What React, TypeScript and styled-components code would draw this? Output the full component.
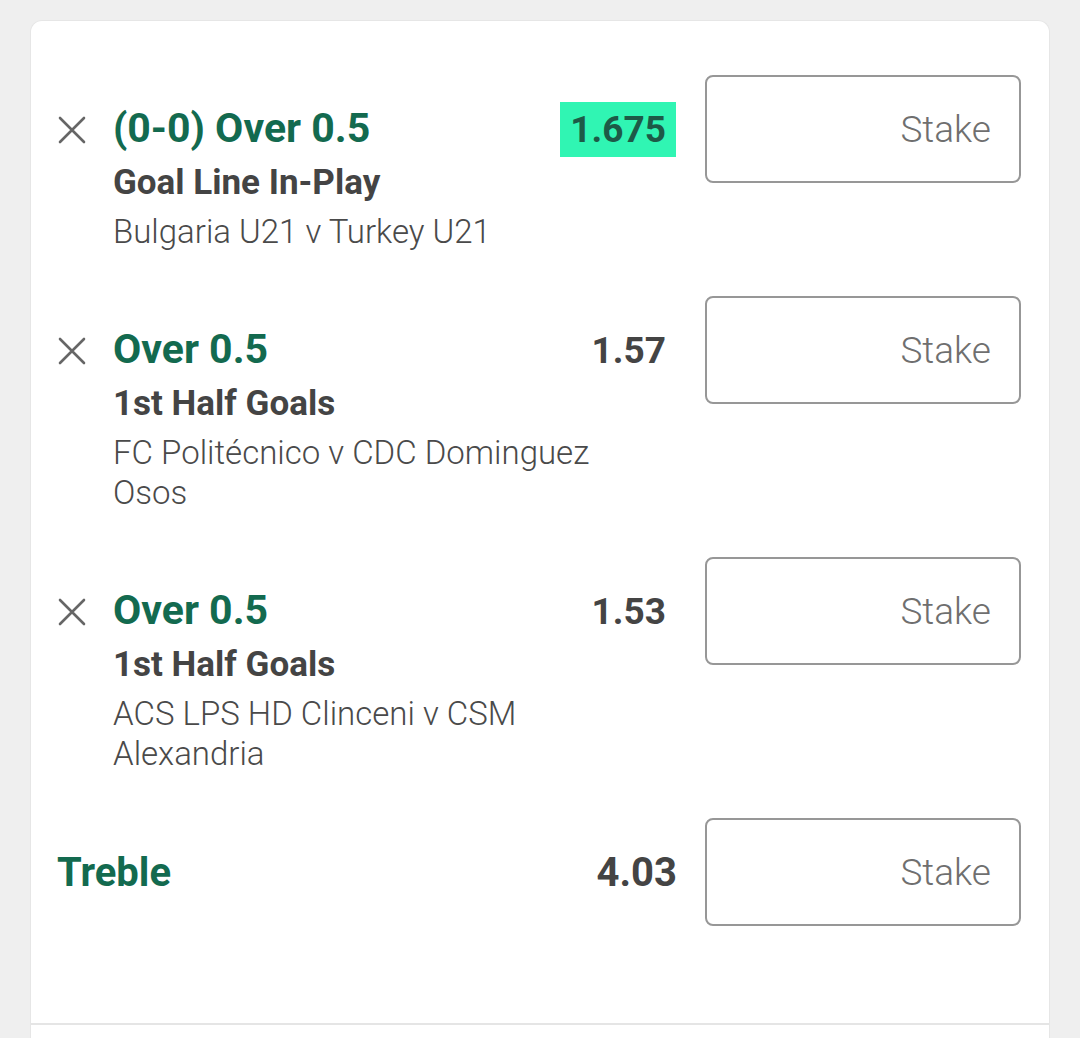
import React from "react";
import styled, { createGlobalStyle } from "styled-components";

const GlobalStyle = createGlobalStyle`
  html, body {
    margin: 0;
    padding: 0;
    background: #efefef;
    overflow: hidden;
    font-family: Roboto, "Noto Sans", "Liberation Sans", sans-serif;
  }
`;

const Page = styled.div`
  padding: 20px 30px 0 30px;
  height: 1038px;
  box-sizing: border-box;
`;

const Card = styled.div`
  background: #ffffff;
  border: 1px solid #e6e6e6;
  border-bottom: none;
  border-radius: 12px 12px 0 0;
  box-sizing: border-box;
  width: 1020px;
`;

const List = styled.div`
  display: flex;
  flex-direction: column;
  gap: 44px;
  padding: 54px 28px 97px 27px;
`;

const BetRow = styled.div`
  display: grid;
  grid-template-columns: 55px 1fr auto 316px;
  align-items: start;
`;

const RemoveButton = styled.button`
  border: none;
  background: transparent;
  padding: 0;
  margin-top: 41px;
  width: 28px;
  height: 28px;
  display: flex;
  align-items: center;
  justify-content: center;
  cursor: pointer;
`;

const Info = styled.div`
  padding-top: 29px;
  margin-right: -30px;
  display: flex;
  flex-direction: column;
  min-width: 0;
`;

const Selection = styled.div`
  font-size: 41px;
  font-weight: 700;
  line-height: 48px;
  color: #136a4f;
  white-space: nowrap;
`;

const Market = styled.div`
  font-size: 35px;
  font-weight: 700;
  line-height: 44px;
  color: #444444;
  margin-top: 9px;
`;

const Event = styled.div`
  font-size: 33px;
  font-weight: 300;
  line-height: 40px;
  color: #4a4a4a;
  margin-top: 7px;
  max-width: 490px;
`;

const Odds = styled.div<{ $flash?: boolean }>`
  margin-top: 27px;
  margin-right: 29px;
  padding: 0 10px;
  height: 55px;
  display: flex;
  align-items: center;
  font-size: 37px;
  font-weight: 700;
  color: ${(p) => (p.$flash ? "#1d5a47" : "#444444")};
  background: ${(p) => (p.$flash ? "#30f5b3" : "transparent")};
`;

const StakeInput = styled.input`
  width: 316px;
  height: 108px;
  box-sizing: border-box;
  border: 2px solid #979797;
  border-radius: 8px;
  padding: 0 28px 0 16px;
  text-align: right;
  font-family: Roboto, "Noto Sans", sans-serif;
  font-size: 37px;
  font-weight: 300;
  color: #444;
  outline: none;
  background: #fff;

  &::placeholder {
    color: #6f6f6f;
  }
`;

const MultipleRow = styled.div`
  display: grid;
  grid-template-columns: 1fr auto 316px;
  align-items: center;
`;

const MultipleLabel = styled.div`
  font-size: 40px;
  font-weight: 700;
  color: #136a4f;
  margin-left: -1px;
`;

const MultipleOdds = styled.div`
  font-size: 40px;
  font-weight: 700;
  color: #444444;
  margin-right: 28px;
`;

const Footer = styled.div`
  border-top: 2px solid #e5e5e5;
  height: 200px;
`;

const CloseIcon = () => (
  <svg width="28" height="28" viewBox="0 0 28 28">
    <path
      d="M2 2 L26 26 M26 2 L2 26"
      stroke="#666666"
      strokeWidth="2.6"
      strokeLinecap="round"
    />
  </svg>
);

type Bet = {
  selection: string;
  market: string;
  event: string;
  odds: string;
  flash?: boolean;
};

const bets: Bet[] = [
  {
    selection: "(0-0) Over 0.5",
    market: "Goal Line In-Play",
    event: "Bulgaria U21 v Turkey U21",
    odds: "1.675",
    flash: true,
  },
  {
    selection: "Over 0.5",
    market: "1st Half Goals",
    event: "FC Politécnico v CDC Dominguez Osos",
    odds: "1.57",
  },
  {
    selection: "Over 0.5",
    market: "1st Half Goals",
    event: "ACS LPS HD Clinceni v CSM Alexandria",
    odds: "1.53",
  },
];

export default function App() {
  return (
    <>
      <GlobalStyle />
      <Page>
        <Card>
          <List>
            {bets.map((b, i) => (
              <BetRow key={i}>
                <RemoveButton aria-label="Remove">
                  <CloseIcon />
                </RemoveButton>
                <Info>
                  <Selection>{b.selection}</Selection>
                  <Market>{b.market}</Market>
                  <Event>{b.event}</Event>
                </Info>
                <Odds $flash={b.flash}>{b.odds}</Odds>
                <StakeInput placeholder="Stake" />
              </BetRow>
            ))}
            <MultipleRow>
              <MultipleLabel>Treble</MultipleLabel>
              <MultipleOdds>4.03</MultipleOdds>
              <StakeInput placeholder="Stake" />
            </MultipleRow>
          </List>
          <Footer />
        </Card>
      </Page>
    </>
  );
}
